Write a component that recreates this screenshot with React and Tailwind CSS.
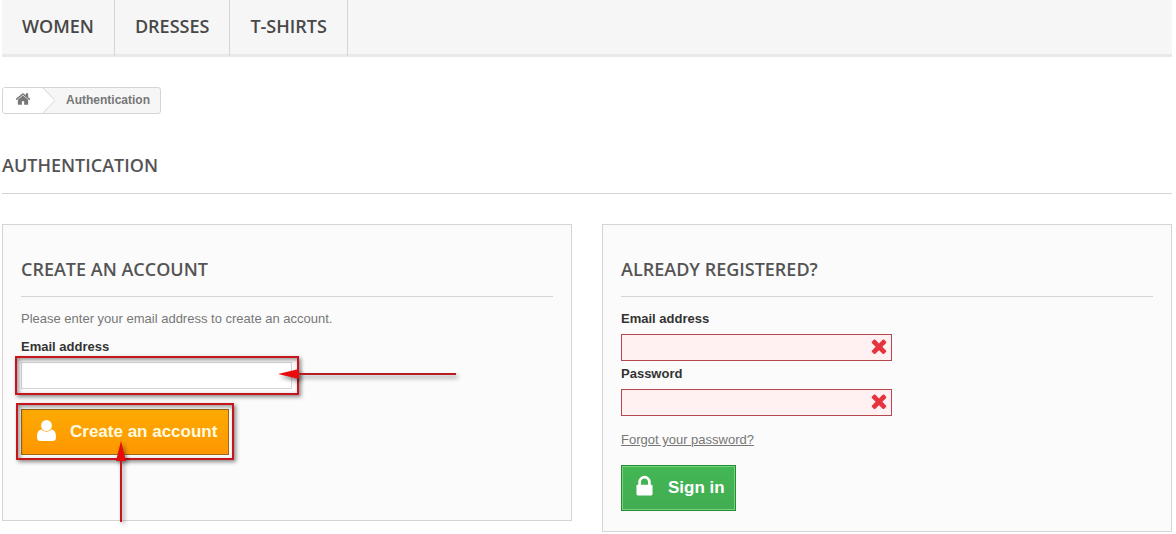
const paths = {
  home: 'M1472 992v480q0 26-19 45t-45 19h-384v-384h-256v384h-384q-26 0-45-19t-19-45v-480q0-1 .5-3t.5-3l575-474 575 474q1 2 1 6zm223-69l-62 74q-8 9-21 11h-3q-13 0-21-7l-692-577-692 577q-12 8-24 7-13-2-21-11l-62-74q-8-10-7-23.5t11-21.5l719-599q32-26 76-26t76 26l244 204v-195q0-14 9-23t23-9h192q14 0 23 9t9 23v408l219 182q10 8 11 21.5t-7 23.5z',
  lock: 'M640 768h512v-192q0-106-75-181t-181-75-181 75-75 181v192zm832 96v576q0 40-28 68t-68 28h-960q-40 0-68-28t-28-68v-576q0-40 28-68t68-28h32v-192q0-184 132-316t316-132 316 132 132 316v192h32q40 0 68 28t28 68z',
  times: 'M1490 1322q0 40-28 68l-136 136q-28 28-68 28t-68-28l-294-294-294 294q-28 28-68 28t-68-28l-136-136q-28-28-28-68t28-68l294-294-294-294q-28-28-28-68t28-68l136-136q28-28 68-28t68 28l294 294 294-294q28-28 68-28t68 28l136 136q28 28 28 68t-28 68l-294 294 294 294q28 28 28 68z',
};

function Icon({ name, className }) {
  return (
    <svg viewBox="0 0 1792 1792" fill="currentColor" aria-hidden="true" className={className}>
      <path d={paths[name]} />
    </svg>
  );
}

function UserIcon({ className }) {
  return (
    <svg viewBox="0 0 19 24" fill="currentColor" aria-hidden="true" className={className}>
      <ellipse cx="9.5" cy="5.5" rx="5.4" ry="5.5" />
      <path d="M4.6 9.6C6 11 7.6 11.7 9.5 11.7S13 11 14.4 9.6C17.8 9.8 19 13 19 17.5C19 19.8 17.8 21 15.8 21H3.2C1.2 21 0 19.8 0 17.5C0 13 1.2 9.8 4.6 9.6Z" />
    </svg>
  );
}

function Panel({ title, children }) {
  return (
    <section className="border border-[#d6d4d4] bg-[#fbfbfb] px-[18px] pt-[34px] pb-5">
      <h2 className="mb-[13px] border-b border-[#d6d4d4] pb-4 font-['Open_Sans',sans-serif] text-lg leading-[21px] font-semibold text-[#555454] uppercase">
        {title}
      </h2>
      {children}
    </section>
  );
}

function InvalidField({ id, label, type }) {
  return (
    <div className="flex flex-col">
      <label htmlFor={id} className="mb-1.5 font-bold text-[#333]">{label}</label>
      <div className="relative w-full max-w-[271px]">
        <input
          id={id}
          type={type}
          aria-invalid="true"
          className="block h-[27px] w-full border border-[#b5484f] bg-[#fff1f2] pr-8 pl-2 outline-none"
        />
        <Icon name="times" className="absolute top-px right-0.5 size-[22px] text-[#e6343f]" />
      </div>
    </div>
  );
}

function Highlight({ className }) {
  return (
    <span className={`pointer-events-none absolute border-2 border-[#c4161c] shadow-[2px_2px_4px_rgba(0,0,0,0.45),inset_2px_2px_4px_rgba(0,0,0,0.4)] ${className}`} />
  );
}

export default function App() {
  return (
    <div className="bg-white pr-1 pl-0.5 font-['Liberation_Sans',Arial,sans-serif] text-[13px] leading-[18px] text-[#777]">
      <nav className="flex border-b-3 border-[#e9e9e9] bg-[#f6f6f6] font-['Open_Sans',sans-serif] text-lg leading-[22px] font-semibold text-[#484848] uppercase">
        {['Women', 'Dresses', 'T-shirts'].map((item) => (
          <a key={item} href="#" className="-mb-0.5 border-r border-[#d6d4d4] px-5 pt-[15px] pb-[19px]">{item}</a>
        ))}
      </nav>

      <main>
        <div className="mt-[30px] flex">
          <div className="flex h-[27px] overflow-hidden rounded-[3px] border border-[#d6d4d4] bg-[#f6f6f6] text-xs leading-6 font-bold">
            <a href="#" aria-label="Home" className="flex bg-white pt-[3px] pl-3">
              <Icon name="home" className="size-4" />
            </a>
            <svg viewBox="0 0 24 25" className="h-[25px] w-6" aria-hidden="true">
              <path d="M0 0H12L24 12.5L12 25H0Z" fill="#fff" />
              <path d="M12 0L24 12.5L12 25" fill="none" stroke="#d6d4d4" />
            </svg>
            <span className="pr-2.5 pl-[11px]">Authentication</span>
          </div>
        </div>

        <h1 className="mt-10 mb-[30px] border-b border-[#d6d4d4] pb-[17px] font-['Open_Sans',sans-serif] text-lg leading-[22px] font-semibold text-[#555454] uppercase">
          Authentication
        </h1>

        <div className="grid grid-cols-2 items-start gap-[30px]">
          <Panel title="Create an account">
            <form className="flex flex-col items-start pb-[45px]">
              <p className="mb-2.5">Please enter your email address to create an account.</p>
              <label htmlFor="new-email" className="mb-1.5 font-bold text-[#333]">Email address</label>
              <div className="relative mb-5 w-full max-w-[271px]">
                <input id="new-email" type="email" className="block h-[27px] w-full border border-[#d6d4d4] bg-white px-2 outline-none" />
                <Highlight className="-inset-y-1.5 -right-[7px] -left-1.5" />
                <svg viewBox="0 0 184 20" className="pointer-events-none absolute top-0.5 left-[257px] h-5 w-[184px] drop-shadow-[2px_3px_2px_rgba(0,0,0,0.45)]" aria-hidden="true">
                  <path d="M18 10H178" stroke="#b91c20" strokeWidth="2" />
                  <path d="M0 10L21 5V15Z" fill="#e80c0c" />
                </svg>
              </div>
              <div className="relative">
                <button type="button" className="flex h-[46px] items-center border border-[#9c6a1b] bg-linear-to-b from-[#fdaa02] to-[#fe9702] pr-[11px] pl-[15px] text-[17px] font-bold text-[#fffbe0]">
                  <UserIcon className="mr-3.5 h-6 w-[19px] text-white" />
                  Create an account
                </button>
                <Highlight className="-inset-x-[5px] -top-1.5 -bottom-[5px]" />
                <svg viewBox="0 0 20 84" className="pointer-events-none absolute top-8 left-[90px] h-[84px] w-5 drop-shadow-[2px_2px_2px_rgba(0,0,0,0.45)]" aria-hidden="true">
                  <path d="M10 18V81" stroke="#c4161c" strokeWidth="2" />
                  <path d="M10 0L15 20H5Z" fill="#e80c0c" />
                </svg>
              </div>
            </form>
          </Panel>

          <Panel title="Already registered?">
            <form className="flex flex-col">
              <div className="flex flex-col gap-1">
                <InvalidField id="email" label="Email address" type="email" />
                <InvalidField id="password" label="Password" type="password" />
              </div>
              <a href="#" className="mt-[15px] mb-4 self-start underline">Forgot your password?</a>
              <button type="button" className="flex h-[46px] items-center self-start border border-[#278a39] bg-linear-to-b from-[#43b754] to-[#42ac52] px-2.5 text-[17px] font-bold text-white shadow-[inset_0_0_0_1px_#74d578]">
                <Icon name="lock" className="mr-[11px] mb-1 size-[25px]" />
                Sign in
              </button>
            </form>
          </Panel>
        </div>
      </main>
    </div>
  );
}
